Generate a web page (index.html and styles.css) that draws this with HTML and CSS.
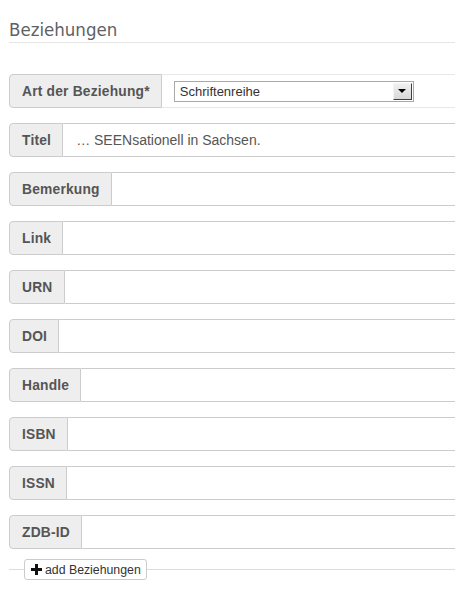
FILE: index.html
```html
<!DOCTYPE html>
<html lang="de">
<head>
<meta charset="utf-8">
<title>Beziehungen</title>
<link rel="stylesheet" href="styles.css">
</head>
<body>
<div class="page">
  <h2 class="legend">Beziehungen</h2>
  <div class="fields">
    <div class="group first">
      <span class="addon">Art der Beziehung*</span>
      <div class="control static">
        <div class="select">
          <span class="select-value">Schriftenreihe</span>
          <span class="select-btn"><span class="arrow"></span></span>
        </div>
      </div>
    </div>
    <div class="group">
      <span class="addon">Titel</span>
      <div class="control"><span class="value">… SEENsationell in Sachsen.</span></div>
    </div>
    <div class="group"><span class="addon">Bemerkung</span><div class="control"></div></div>
    <div class="group"><span class="addon">Link</span><div class="control"></div></div>
    <div class="group"><span class="addon">URN</span><div class="control"></div></div>
    <div class="group"><span class="addon">DOI</span><div class="control"></div></div>
    <div class="group"><span class="addon">Handle</span><div class="control"></div></div>
    <div class="group"><span class="addon">ISBN</span><div class="control"></div></div>
    <div class="group"><span class="addon">ISSN</span><div class="control"></div></div>
    <div class="group"><span class="addon">ZDB-ID</span><div class="control"></div></div>
  </div>
  <div class="add-row">
    <button class="add-btn" type="button">
      <svg class="plus" width="11" height="11" viewBox="0 0 11 11"><path d="M4 0h3v4h4v3H7v4H4V7H0V4h4z" fill="#111"/></svg>
      <span>add Beziehungen</span>
    </button>
  </div>
</div>
</body>
</html>
```
FILE: styles.css
```css
html, body {
  margin: 0;
  padding: 0;
  background: #fff;
  overflow: hidden;
}
body {
  font-family: "Liberation Sans", Arial, sans-serif;
  font-size: 14px;
  color: #555;
}
.page {
  width: 470px;
  padding-left: 9px;
}
.legend {
  margin: 0;
  padding-top: 17px;
  height: 25px;
  line-height: 26px;
  font-family: "DejaVu Sans Condensed", "DejaVu Sans", sans-serif;
  font-weight: normal;
  font-size: 18.5px;
  color: #5f6166;
  border-bottom: 1px solid #e5e5e5;
}
.fields {
  margin-top: 31px;
  display: flex;
  flex-direction: column;
  gap: 15px;
}
.group {
  display: flex;
  height: 34px;
}
.addon {
  display: flex;
  align-items: center;
  padding: 0 11px 0 12px;
  background: #eee;
  border: 1px solid #ccc;
  border-radius: 4px 0 0 4px;
  font-weight: bold;
  font-size: 13.8px;
  letter-spacing: 0.2px;
  color: #555;
  white-space: nowrap;
  box-sizing: border-box;
}
.control {
  flex: 1;
  border: 1px solid #ccc;
  border-left: none;
  box-sizing: border-box;
  display: flex;
  align-items: center;
  padding-left: 13px;
  color: #555;
}
.control.static {
  border-color: #e8e8e8;
  padding-left: 12px;
}
.select {
  width: 240px;
  height: 21px;
  box-sizing: border-box;
  border: 1px solid #a9a9a9;
  display: flex;
  align-items: center;
  justify-content: space-between;
  background: #fff;
  font-size: 13px;
}
.select-value {
  padding-left: 5px;
  color: #333;
}
.select-btn {
  width: 19px;
  height: 17px;
  margin-right: 1px;
  box-sizing: border-box;
  border: 1px solid;
  border-color: #f4f4f4 #404040 #404040 #f4f4f4;
  background: linear-gradient(#f0f0f0, #d8d8d8);
  display: flex;
  align-items: center;
  justify-content: center;
}
.arrow {
  width: 0;
  height: 0;
  border-left: 4px solid transparent;
  border-right: 4px solid transparent;
  border-top: 4px solid #000;
}
.add-row {
  position: relative;
  margin-top: 10px;
  height: 21px;
  display: flex;
  align-items: center;
}
.add-row::before {
  content: "";
  position: absolute;
  left: 0;
  right: 0;
  top: 10px;
  border-top: 1px solid #ddd;
}
.add-btn {
  position: relative;
  margin-left: 15px;
  height: 21px;
  padding: 0 5px 0 6px;
  background: #fff;
  border: 1px solid #ccc;
  border-radius: 3px;
  display: flex;
  align-items: center;
  gap: 3px;
  font-family: "Liberation Sans", Arial, sans-serif;
  font-size: 12.3px;
  color: #333;
}
.plus {
  display: block;
}
```
